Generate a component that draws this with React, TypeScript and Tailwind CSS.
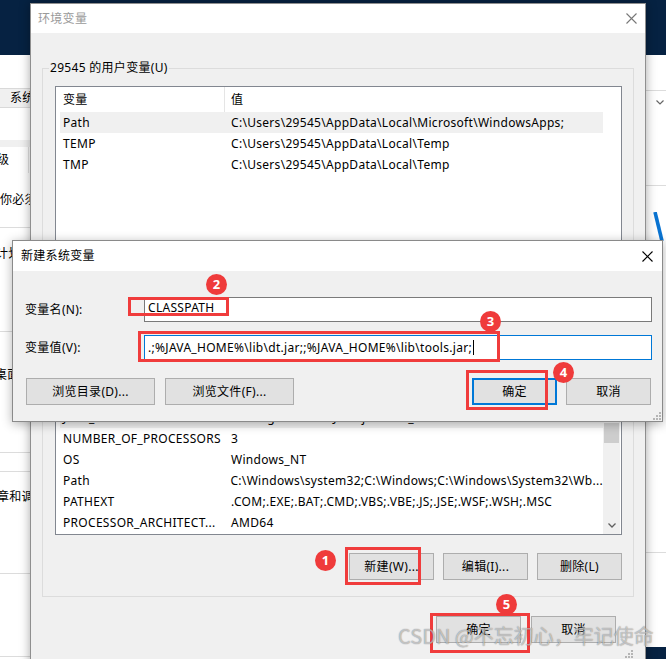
import React from "react";

const FONT = "font-['Noto_Sans','Noto_Sans_CJK_SC',sans-serif]";

function CloseX({ color }: { color: string }) {
  return (
    <svg width="11" height="11" viewBox="0 0 11 11">
      <path d="M0.5 0.5 L10.5 10.5 M10.5 0.5 L0.5 10.5" stroke={color} strokeWidth="1.1" fill="none" />
    </svg>
  );
}

function Grip() {
  return (
    <svg width="9" height="9" viewBox="0 0 9 9">
      <rect x="7" y="1" width="2" height="2" fill="#b5b5b5" />
      <rect x="4" y="4" width="2" height="2" fill="#b5b5b5" />
      <rect x="7" y="4" width="2" height="2" fill="#b5b5b5" />
      <rect x="1" y="7" width="2" height="2" fill="#b5b5b5" />
      <rect x="4" y="7" width="2" height="2" fill="#b5b5b5" />
      <rect x="7" y="7" width="2" height="2" fill="#b5b5b5" />
    </svg>
  );
}

function Btn({ children, w, primary }: { children: React.ReactNode; w: string; primary?: boolean }) {
  return (
    <div
      className={
        (primary ? "border-2 border-[#0078d7] " : "border border-[#adadad] ") +
        w +
        " h-[27px] bg-[#e1e1e1] flex items-center justify-center text-[12px] text-black"
      }
    >
      {children}
    </div>
  );
}

function Header() {
  return (
    <div className="flex h-[25px] shrink-0 items-center bg-white">
      <div className="w-[169px] h-full flex items-center pl-[7px] border-r border-[#e5e5e5]">变量</div>
      <div className="pl-[6px]">值</div>
    </div>
  );
}

function Row({ name, value, selected }: { name: string; value: string; selected?: boolean }) {
  return (
    <div className={(selected ? "bg-[#f0f0f0] " : "") + "flex h-[21px] shrink-0 items-center ml-[4px] whitespace-nowrap"}>
      <div className="w-[165px] pl-[3px] overflow-hidden">{name}</div>
      <div className="pl-[6px]">{value}</div>
    </div>
  );
}

function Badge({ n, x, y }: { n: string; x: string; y: string }) {
  return (
    <div
      className={
        "absolute " +
        x +
        " " +
        y +
        " w-[21px] h-[21px] rounded-full bg-[#ef3b3b] text-white text-[13px] font-bold tracking-normal flex items-center justify-center leading-none"
      }
    >
      {n}
    </div>
  );
}

export default function App() {
  return (
    <div className={"relative w-[666px] h-[659px] overflow-hidden bg-[#062242] text-[12px] tracking-[0.3px] text-black " + FONT}>
      {/* background window, left */}
      <div className="absolute left-0 top-[55px] w-[40px] h-[620px] bg-white overflow-hidden flex flex-col whitespace-nowrap">
        <div className="h-[33px] shrink-0" />
        <div className="h-[20px] shrink-0 border-y border-[#d9d9d9] bg-[#f0f0f0] flex items-center pl-[10px]">系统</div>
        <div className="h-[32px] shrink-0" />
        <div className="h-[7px] shrink-0 bg-[#f0f0f0]" />
        <div className="h-[26px] shrink-0 w-[29px] border-r border-[#e3e3e3] flex items-center">
          <span className="-ml-[3px]">级</span>
        </div>
        <div className="h-[14px] shrink-0" />
        <div className="h-[26px] shrink-0 flex items-center">你必须</div>
        <div className="h-[15px] shrink-0 border-b border-[#dcdcdc]" />
        <div className="h-[13px] shrink-0" />
        <div className="h-[26px] shrink-0 flex items-center">
          <span className="-ml-[4px]">计划</span>
        </div>
        <div className="h-[65px] shrink-0 border-b border-[#dcdcdc]" />
        <div className="h-[30px] shrink-0" />
        <div className="h-[26px] shrink-0 flex items-center">
          <span className="-ml-[5px]">桌面</span>
        </div>
        <div className="h-[65px] shrink-0 border-b border-[#dcdcdc]" />
        <div className="h-[19px] shrink-0 border-b border-[#dcdcdc]" />
        <div className="h-[12px] shrink-0" />
        <div className="h-[26px] shrink-0 flex items-center">
          <span className="-ml-[3px]">章和调</span>
        </div>
        <div className="h-[64px] shrink-0 border-b border-[#dcdcdc]" />
        <div className="h-[83px] shrink-0 border-b border-[#dcdcdc]" />
      </div>

      {/* background window, right */}
      <div className="absolute left-[630px] top-[55px] w-[36px] h-[592px] bg-white flex flex-col">
        <div className="h-[36px] shrink-0 border-b border-[#dcdcdc]" />
        <div className="h-[22px] shrink-0 flex items-center justify-end pr-[2px]">
          <svg width="8" height="5" viewBox="0 0 8 5">
            <path d="M0.5 0.5 L4 4 L7.5 0.5" stroke="#666" strokeWidth="1.2" fill="none" />
          </svg>
        </div>
        <div className="h-[73px] shrink-0 border-b border-[#dcdcdc]" />
        <div className="h-[367px] shrink-0 border-b border-[#dcdcdc]" />
        <svg width="14" height="30" viewBox="0 0 14 30" className="absolute left-[22px] top-[157px]">
          <path d="M3 0 L10 29" stroke="#0a74d2" strokeWidth="3.6" fill="none" />
        </svg>
      </div>

      {/* main window 环境变量 */}
      <div className="absolute left-[30px] top-[3px] w-[616px] h-[680px] bg-[#f0f0f0] border border-[#8f8f8f] shadow-[0_0_10px_rgba(0,0,0,0.35)] flex flex-col">
        <div className="h-[29px] shrink-0 bg-white flex items-center justify-between pl-[7px] pr-[8px]">
          <span className="text-[#9a9a9a]">环境变量</span>
          <CloseX color="#777777" />
        </div>
        <div className="px-[11px] flex flex-col">
          <fieldset className="mt-[27px] border border-[#dcdcdc]">
            <legend className="ml-[6px] px-[1px] leading-[16px]">29545 的用户变量(U)</legend>
            <div className="pt-[10px] px-[11px] pb-[16px] pl-[12px] flex flex-col">
              <div className="h-[160px] border border-[#828790] bg-white flex">
                <div className="w-[547px] flex flex-col">
                  <Header />
                  <Row name="Path" value="C:\Users\29545\AppData\Local\Microsoft\WindowsApps;" selected />
                  <Row name="TEMP" value="C:\Users\29545\AppData\Local\Temp" />
                  <Row name="TMP" value="C:\Users\29545\AppData\Local\Temp" />
                </div>
              </div>
              <div className="mt-[18px] flex justify-end gap-[9px]">
                <Btn w="w-[85px]">新建(N)...</Btn>
                <Btn w="w-[85px]">编辑(E)...</Btn>
                <Btn w="w-[85px]">删除(D)</Btn>
              </div>
            </div>
          </fieldset>

          <fieldset className="mt-[22px] border border-[#dcdcdc]">
            <legend className="ml-[6px] px-[1px] leading-[16px]">系统变量(S)</legend>
            <div className="pt-[10px] pr-[11px] pb-[16px] pl-[12px] flex flex-col">
              <div className="h-[179px] border border-[#828790] bg-white flex">
                <div className="w-[547px] flex flex-col justify-end overflow-hidden pb-[1px]">
                  <Header />
                  <Row name="ComSpec" value="C:\Windows\system32\cmd.exe" />
                  <Row name="DriverData" value="C:\Windows\System32\Drivers\DriverData" />
                  <Row name="JAVA_HOME" value="C:\Program Files\Java\jdk1.8.0_181" selected />
                  <Row name="NUMBER_OF_PROCESSORS" value="3" />
                  <Row name="OS" value="Windows_NT" />
                  <Row name="Path" value="C:\Windows\system32;C:\Windows;C:\Windows\System32\Wb..." />
                  <Row name="PATHEXT" value=".COM;.EXE;.BAT;.CMD;.VBS;.VBE;.JS;.JSE;.WSF;.WSH;.MSC" />
                  <Row name="PROCESSOR_ARCHITECT..." value="AMD64" />
                </div>
                <div className="w-[17px] bg-[#f0f0f0] flex flex-col items-center">
                  <div className="h-[17px] shrink-0" />
                  <div className="h-[49px] shrink-0" />
                  <div className="h-[20px] w-[15px] shrink-0 bg-[#cdcdcd]" />
                  <div className="flex-1" />
                  <div className="h-[17px] shrink-0 flex items-center justify-center">
                    <svg width="8" height="5" viewBox="0 0 8 5">
                      <path d="M0.5 0.5 L4 4 L7.5 0.5" stroke="#606060" strokeWidth="1.3" fill="none" />
                    </svg>
                  </div>
                </div>
              </div>
              <div className="mt-[18px] flex justify-end gap-[9px]">
                <Btn w="w-[85px]">新建(W)...</Btn>
                <Btn w="w-[85px]">编辑(I)...</Btn>
                <Btn w="w-[85px]">删除(L)</Btn>
              </div>
            </div>
          </fieldset>

          <div className="mt-[19px] flex justify-end gap-[10px] pr-[18px]">
            <Btn w="w-[85px]">确定</Btn>
            <Btn w="w-[85px]">取消</Btn>
          </div>
          <div className="flex justify-end pr-[1px] mt-[6px]">
            <Grip />
          </div>
        </div>
      </div>

      {/* dialog 新建系统变量 */}
      <div className="absolute left-[12px] top-[240px] w-[651px] h-[182px] bg-[#f0f0f0] border border-[#8a8a8a] shadow-[0_2px_10px_rgba(0,0,0,0.3)] flex flex-col">
        <div className="h-[30px] shrink-0 bg-white flex items-center justify-between pl-[8px] pr-[9px]">
          <span>新建系统变量</span>
          <CloseX color="#000000" />
        </div>
        <div className="pl-[12px] pr-[10px] pt-[26px] flex flex-col">
          <div className="flex items-center h-[25px]">
            <div className="w-[119px] shrink-0">变量名(N):</div>
            <div className="flex-1 h-[25px] border border-[#7a7a7a] bg-white flex items-center pl-[3px] pb-[3px]">CLASSPATH</div>
          </div>
          <div className="flex items-center h-[25px] mt-[13px]">
            <div className="w-[119px] shrink-0">变量值(V):</div>
            <div className="flex-1 h-[25px] border border-[#0078d7] bg-white flex items-center pl-[3px]">
              <span>.;%JAVA_HOME%\lib\dt.jar;;%JAVA_HOME%\lib\tools.jar;</span>
              <span className="w-px h-[15px] bg-black ml-[1px]" />
            </div>
          </div>
          <div className="flex items-center mt-[18px] pl-[1px] pr-[1px]">
            <Btn w="w-[129px]">浏览目录(D)...</Btn>
            <div className="w-[10px]" />
            <Btn w="w-[129px]">浏览文件(F)...</Btn>
            <div className="flex-1" />
            <Btn w="w-[85px]" primary>
              确定
            </Btn>
            <div className="w-[9px]" />
            <Btn w="w-[85px]">取消</Btn>
          </div>
          <div className="flex justify-end -mr-[9px] mt-[6px]">
            <Grip />
          </div>
        </div>
      </div>

      {/* annotations */}
      <div className="absolute left-[345px] top-[547px] w-[76px] h-[38px] border-[3px] border-[#f03c3c]" />
      <div className="absolute left-[128px] top-[297px] w-[101px] h-[19px] border-[3px] border-[#f03c3c]" />
      <div className="absolute left-[138px] top-[331px] w-[362px] h-[31px] border-[3px] border-[#f03c3c]" />
      <div className="absolute left-[466px] top-[370px] w-[82px] h-[40px] border-[3px] border-[#f03c3c]" />
      <div className="absolute left-[430px] top-[613px] w-[100px] h-[40px] border-[3px] border-[#f03c3c]" />

      <Badge n="1" x="left-[315px]" y="top-[550px]" />
      <Badge n="2" x="left-[206px]" y="top-[274px]" />
      <Badge n="3" x="left-[480px]" y="top-[311px]" />
      <Badge n="4" x="left-[553px]" y="top-[362px]" />
      <Badge n="5" x="left-[496px]" y="top-[594px]" />

      <div className="absolute left-[398px] top-[623px] text-[20px] leading-[26px] tracking-normal whitespace-nowrap font-['Noto_Sans_CJK_SC',sans-serif] text-[rgba(255,255,255,0.55)] [text-shadow:0_0_1px_rgba(0,0,0,0.55)]">
        CSDN @不忘初心，牢记使命
      </div>
    </div>
  );
}
